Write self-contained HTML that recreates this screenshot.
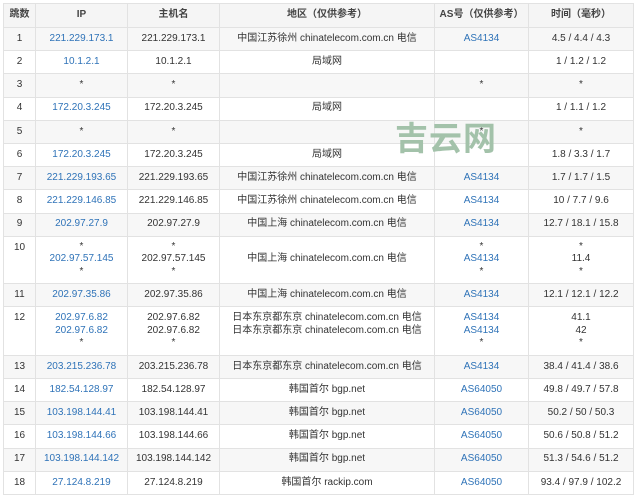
<!DOCTYPE html>
<html><head><meta charset="utf-8"><style>
body{margin:0;background:#fff;font-family:"Liberation Sans","Noto Sans CJK SC",sans-serif;font-size:10px;color:#333}
table{position:absolute;left:3px;top:3px;border-collapse:collapse;table-layout:fixed;width:630px}
td,th{border:1px solid #e2e2e2;text-align:center;padding:0;line-height:12.5px;white-space:nowrap;overflow:hidden}
th{height:23px;background:#f5f5f5;font-weight:bold;color:#444}
tr{height:23.2px}
tr.s td{background:#f7f7f7}
td.n{vertical-align:top;padding-top:5px}
a{color:#2f73b8;text-decoration:none}
.wm{position:absolute;left:395px;top:112px;font-size:33px;font-weight:bold;color:#a3c2aa;font-family:"Noto Sans CJK SC",sans-serif;letter-spacing:1px}
</style></head><body>
<table>
<colgroup><col style="width:32px"><col style="width:92px"><col style="width:92px"><col style="width:215px"><col style="width:94px"><col style="width:105px"></colgroup>
<tr><th>跳数</th><th>IP</th><th>主机名</th><th>地区（仅供参考）</th><th>AS号（仅供参考）</th><th>时间（毫秒）</th></tr>
<tr class="s"><td>1</td><td><a>221.229.173.1</a></td><td>221.229.173.1</td><td>中国江苏徐州 chinatelecom.com.cn 电信</td><td><a>AS4134</a></td><td>4.5 / 4.4 / 4.3</td></tr>
<tr><td>2</td><td><a>10.1.2.1</a></td><td>10.1.2.1</td><td>局域网</td><td></td><td>1 / 1.2 / 1.2</td></tr>
<tr class="s"><td>3</td><td>*</td><td>*</td><td></td><td>*</td><td>*</td></tr>
<tr><td>4</td><td><a>172.20.3.245</a></td><td>172.20.3.245</td><td>局域网</td><td></td><td>1 / 1.1 / 1.2</td></tr>
<tr class="s"><td>5</td><td>*</td><td>*</td><td></td><td>*</td><td>*</td></tr>
<tr><td>6</td><td><a>172.20.3.245</a></td><td>172.20.3.245</td><td>局域网</td><td></td><td>1.8 / 3.3 / 1.7</td></tr>
<tr class="s"><td>7</td><td><a>221.229.193.65</a></td><td>221.229.193.65</td><td>中国江苏徐州 chinatelecom.com.cn 电信</td><td><a>AS4134</a></td><td>1.7 / 1.7 / 1.5</td></tr>
<tr><td>8</td><td><a>221.229.146.85</a></td><td>221.229.146.85</td><td>中国江苏徐州 chinatelecom.com.cn 电信</td><td><a>AS4134</a></td><td>10 / 7.7 / 9.6</td></tr>
<tr class="s"><td>9</td><td><a>202.97.27.9</a></td><td>202.97.27.9</td><td>中国上海 chinatelecom.com.cn 电信</td><td><a>AS4134</a></td><td>12.7 / 18.1 / 15.8</td></tr>
<tr style="height:47px"><td class="n">10</td><td>*<br><a>202.97.57.145</a><br>*</td><td>*<br>202.97.57.145<br>*</td><td>中国上海 chinatelecom.com.cn 电信</td><td>*<br><a>AS4134</a><br>*</td><td>*<br>11.4<br>*</td></tr>
<tr class="s"><td>11</td><td><a>202.97.35.86</a></td><td>202.97.35.86</td><td>中国上海 chinatelecom.com.cn 电信</td><td><a>AS4134</a></td><td>12.1 / 12.1 / 12.2</td></tr>
<tr style="height:49px"><td class="n">12</td><td><a>202.97.6.82</a><br><a>202.97.6.82</a><br>*</td><td>202.97.6.82<br>202.97.6.82<br>*</td><td>日本东京都东京 chinatelecom.com.cn 电信<br>日本东京都东京 chinatelecom.com.cn 电信<br>&nbsp;</td><td><a>AS4134</a><br><a>AS4134</a><br>*</td><td>41.1<br>42<br>*</td></tr>
<tr class="s"><td>13</td><td><a>203.215.236.78</a></td><td>203.215.236.78</td><td>日本东京都东京 chinatelecom.com.cn 电信</td><td><a>AS4134</a></td><td>38.4 / 41.4 / 38.6</td></tr>
<tr><td>14</td><td><a>182.54.128.97</a></td><td>182.54.128.97</td><td>韩国首尔 bgp.net</td><td><a>AS64050</a></td><td>49.8 / 49.7 / 57.8</td></tr>
<tr class="s"><td>15</td><td><a>103.198.144.41</a></td><td>103.198.144.41</td><td>韩国首尔 bgp.net</td><td><a>AS64050</a></td><td>50.2 / 50 / 50.3</td></tr>
<tr><td>16</td><td><a>103.198.144.66</a></td><td>103.198.144.66</td><td>韩国首尔 bgp.net</td><td><a>AS64050</a></td><td>50.6 / 50.8 / 51.2</td></tr>
<tr class="s"><td>17</td><td><a>103.198.144.142</a></td><td>103.198.144.142</td><td>韩国首尔 bgp.net</td><td><a>AS64050</a></td><td>51.3 / 54.6 / 51.2</td></tr>
<tr><td>18</td><td><a>27.124.8.219</a></td><td>27.124.8.219</td><td>韩国首尔 rackip.com</td><td><a>AS64050</a></td><td>93.4 / 97.9 / 102.2</td></tr>
</table>
<div class="wm">吉云网</div>
</body></html>
